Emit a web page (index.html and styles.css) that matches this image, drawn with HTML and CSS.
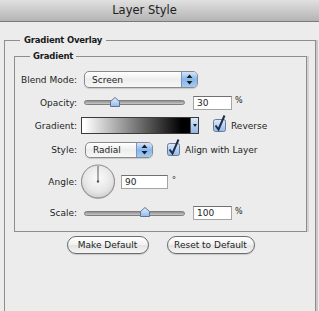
FILE: index.html
```html
<!DOCTYPE html>
<html lang="en">

<head>
    <meta charset="UTF-8" />
    <meta name="viewport" content="width=device-width, initial-scale=1.0" />
    <title>Layer Style</title>
    <link rel="stylesheet" href="styles.css">
</head>

<body>
    <div class="titlebar">Layer Style</div>

    <fieldset class="group outer">
        <legend>Gradient Overlay</legend>

        <fieldset class="group inner">
            <legend>Gradient</legend>

            <div class="form">
                <span class="lbl">Blend Mode:</span>
                <div class="ctl">
                    <div class="select blend">
                        <span class="val">Screen</span>
                        <span class="arrows">
                            <svg width="7" height="11" viewBox="0 0 7 11">
                                <polygon points="3.5,0.5 6.5,4 0.5,4" fill="#1d1d1d" />
                                <polygon points="0.5,7 6.5,7 3.5,10.5" fill="#1d1d1d" />
                            </svg>
                        </span>
                    </div>
                </div>

                <span class="lbl">Opacity:</span>
                <div class="ctl">
                    <div class="slider">
                        <div class="track"></div>
                        <svg class="thumb" style="left: 26px" width="10" height="10" viewBox="0 0 10 10">
                            <defs>
                                <linearGradient id="tg1" x1="0" y1="0" x2="0" y2="1">
                                    <stop offset="0" stop-color="#e6f1fd" />
                                    <stop offset="1" stop-color="#8fbbea" />
                                </linearGradient>
                            </defs>
                            <polygon points="0.5,4.5 5,0.5 9.5,4.5 9.5,9.5 0.5,9.5" fill="url(#tg1)" stroke="#5f7493" />
                        </svg>
                    </div>
                    <span class="num op">30</span>
                    <span class="unit">%</span>
                </div>

                <span class="lbl">Gradient:</span>
                <div class="ctl">
                    <div class="gradbar">
                        <span class="drop">
                            <svg width="4" height="3" viewBox="0 0 4 3">
                                <polygon points="0,0 4,0 2,3" fill="#1d1d1d" />
                            </svg>
                        </span>
                    </div>
                    <svg class="check" width="13" height="13" viewBox="0 0 13 13">
                        <defs>
                            <linearGradient id="cb1" x1="0" y1="0" x2="0" y2="1">
                                <stop offset="0" stop-color="#dceafa" />
                                <stop offset="1" stop-color="#93bbe8" />
                            </linearGradient>
                        </defs>
                        <rect x="0.5" y="0.5" width="12" height="12" rx="2" fill="url(#cb1)" stroke="#6a7c98" />
                        <path d="M2.5 6.5 L5.5 10.5 L11.5 -3.5" fill="none" stroke="#1f2d4a" stroke-width="2" />
                    </svg>
                    <span class="chklbl">Reverse</span>
                </div>

                <span class="lbl">Style:</span>
                <div class="ctl">
                    <div class="select style">
                        <span class="val">Radial</span>
                        <span class="arrows">
                            <svg width="7" height="11" viewBox="0 0 7 11">
                                <polygon points="3.5,0.5 6.5,4 0.5,4" fill="#1d1d1d" />
                                <polygon points="0.5,7 6.5,7 3.5,10.5" fill="#1d1d1d" />
                            </svg>
                        </span>
                    </div>
                    <svg class="check" width="13" height="13" viewBox="0 0 13 13">
                        <rect x="0.5" y="0.5" width="12" height="12" rx="2" fill="url(#cb1)" stroke="#6a7c98" />
                        <path d="M2.5 6.5 L5.5 10.5 L11.5 -3.5" fill="none" stroke="#1f2d4a" stroke-width="2" />
                    </svg>
                    <span class="chklbl">Align with Layer</span>
                </div>

                <span class="lbl">Angle:</span>
                <div class="ctl">
                    <svg class="dial" width="35" height="36" viewBox="0 0 35 36">
                        <defs>
                            <radialGradient id="dg" cx="0.5" cy="0.4" r="0.6">
                                <stop offset="0" stop-color="#fbfbfb" />
                                <stop offset="0.7" stop-color="#e6e6e6" />
                                <stop offset="1" stop-color="#cfcfcf" />
                            </radialGradient>
                        </defs>
                        <circle cx="17" cy="18" r="17" fill="#c4c4c4" />
                        <circle cx="17" cy="17.5" r="16.5" fill="url(#dg)" stroke="#8a8a8a" />
                        <line x1="17" y1="17.5" x2="17" y2="2" stroke="#5a5a5a" stroke-width="1" />
                        <circle cx="17" cy="17.5" r="1.2" fill="#5a5a5a" />
                    </svg>
                    <span class="num ang">90</span>
                    <span class="unit deg">°</span>
                </div>

                <span class="lbl">Scale:</span>
                <div class="ctl">
                    <div class="slider">
                        <div class="track"></div>
                        <svg class="thumb" style="left: 56px" width="10" height="10" viewBox="0 0 10 10">
                            <polygon points="0.5,4.5 5,0.5 9.5,4.5 9.5,9.5 0.5,9.5" fill="url(#tg1)" stroke="#5f7493" />
                        </svg>
                    </div>
                    <span class="num op">100</span>
                    <span class="unit">%</span>
                </div>
            </div>
        </fieldset>

        <div class="buttons">
            <button class="btn make">Make Default</button>
            <button class="btn reset">Reset to Default</button>
        </div>
    </fieldset>
</body>

</html>
```

FILE: styles.css
```css
body {
    margin: 0;
    height: 311px;
    overflow: hidden;
    background: #ececec;
    font-family: "DejaVu Sans", sans-serif;
    font-size: 9px;
    color: #1e1e1e;
}

.titlebar {
    height: 22px;
    line-height: 21px;
    box-sizing: border-box;
    padding-right: 30px;
    text-align: center;
    font-size: 11.5px;
    color: #202020;
    background: linear-gradient(#e0e0e0, #b4b4b4);
    border-bottom: 1px solid #7a7a7a;
}

/* group boxes */
.group {
    margin: 0;
    padding: 0;
    min-width: 0;
    border: 1px solid #8d8d8d;
}

.group legend {
    font-weight: bold;
    font-size: 8.5px;
    line-height: 12px;
    letter-spacing: -0.2px;
    color: #1a1a1a;
}

.outer {
    margin: 12px 3px 0 4px;
    padding: 4px 8px 60px 9px;
    box-shadow: 2px 0 0 #c8c8c8;
}

.outer > legend {
    margin-left: 6px;
    padding: 0 4px;
}

.inner {
    padding: 6px 0 6px 0;
    box-shadow: 2px 0 0 #d2d2d2;
}

.inner > legend {
    margin-left: 15px;
    padding: 0 3px;
}

/* rows */
.form {
    display: grid;
    grid-template-columns: 62px 1fr;
    grid-template-rows: 23px 23px 23px 25px 39px 24px;
    column-gap: 4px;
    align-items: center;
}

.lbl {
    text-align: right;
}

.ctl {
    display: flex;
    align-items: center;
}

/* popup menus */
.select {
    display: flex;
    align-items: center;
    height: 17px;
    box-sizing: border-box;
    border: 1px solid #8a8a8a;
    border-radius: 5px;
    overflow: hidden;
    background: linear-gradient(#ffffff, #ededed 50%, #f7f7f7);
    box-shadow: 0 1px 1px rgba(0, 0, 0, 0.15);
}

.select .val {
    flex: 1;
    padding-left: 7px;
}

.select .arrows {
    align-self: stretch;
    width: 15px;
    display: flex;
    align-items: center;
    justify-content: center;
    border-left: 1px solid #7b95b8;
    background: linear-gradient(#d3e6fb, #86b6ec 50%, #a3cbf4);
}

.blend {
    width: 114px;
    margin-left: 3px;
}

.style {
    width: 68px;
    height: 16px;
    margin-left: 4px;
}

/* sliders */
.slider {
    position: relative;
    width: 101px;
    height: 10px;
    margin-left: 3px;
    display: flex;
    align-items: center;
}

.track {
    width: 100%;
    height: 5px;
    box-sizing: border-box;
    border: 1px solid #7e7e7e;
    border-radius: 3px;
    background: linear-gradient(#8f8f8f, #c9c9c9);
}

.thumb {
    position: absolute;
    top: -1px;
}

/* number fields */
.num {
    height: 14px;
    line-height: 13px;
    box-sizing: border-box;
    padding-left: 3px;
    background: #fff;
    border: 1px solid #a4a4a4;
    border-top-color: #707070;
}

.op {
    width: 39px;
    margin-left: 8px;
}

.ang {
    width: 47px;
    margin-left: 5px;
}

.unit {
    margin-left: 3px;
    margin-bottom: 4px;
    font-size: 8px;
}

.deg {
    margin-left: 4px;
    margin-bottom: 2px;
}

/* gradient preview */
.gradbar {
    display: flex;
    width: 118px;
    height: 17px;
    box-sizing: border-box;
    border: 1px solid #3a3a3a;
    background: linear-gradient(to right, #ffffff 2%, #000000 86%);
}

.gradbar .drop {
    margin-left: auto;
    width: 7px;
    display: flex;
    align-items: center;
    justify-content: center;
    border-left: 1px solid #555;
    background: linear-gradient(#dbe9fa, #8db7e7);
}

/* checkboxes */
.check {
    overflow: visible;
    margin-left: 14px;
}

.chklbl {
    margin-left: 5px;
}

.dial {
    margin-top: 1px;
}

/* buttons */
.buttons {
    display: flex;
    justify-content: center;
    gap: 18px;
    margin-top: 4px;
}

.btn {
    height: 18px;
    padding: 0;
    font-family: "DejaVu Sans", sans-serif;
    font-size: 9px;
    color: #1e1e1e;
    border: 1px solid #6c6c6c;
    border-radius: 9px;
    background: linear-gradient(#ffffff, #f1f1f1 50%, #e3e3e3 51%, #f5f5f5);
    box-shadow: 0 1px 1px rgba(0, 0, 0, 0.15);
}

.make {
    width: 82px;
}

.reset {
    width: 88px;
}
```
